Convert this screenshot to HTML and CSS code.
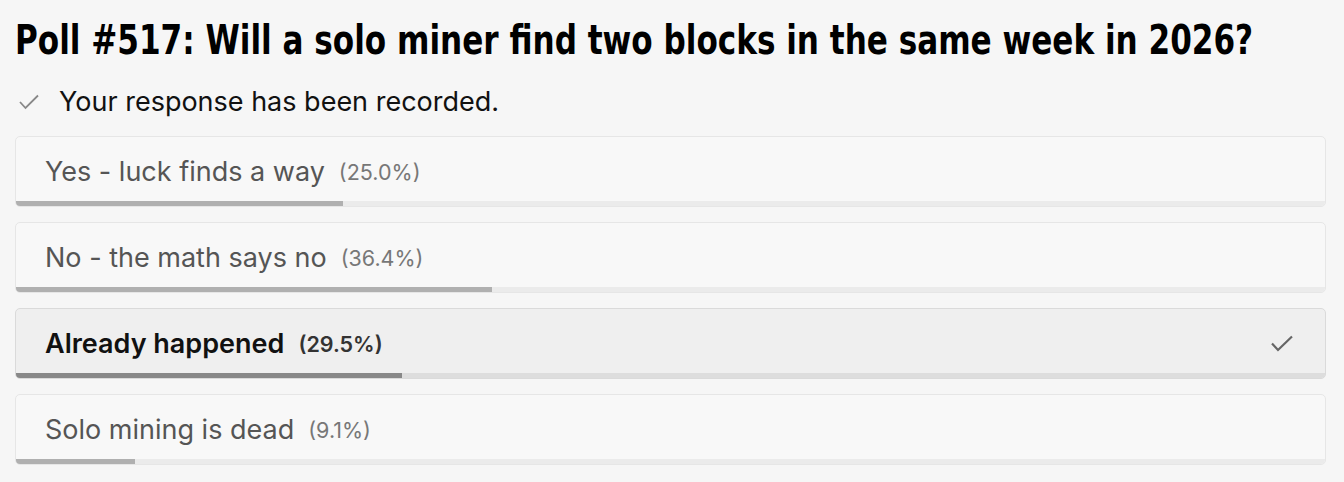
FILE: index.html
```html
<!DOCTYPE html>
<html lang="en">
<head>
<meta charset="utf-8">
<title>Poll #517</title>
<link rel="stylesheet" href="styles.css">
</head>
<body>
<main class="poll">
  <h1 class="poll-title"><span class="poll-title-text">Poll #517: Will a solo miner find two blocks in the same week in 2026?</span></h1>
  <p class="poll-status">
    <svg class="status-check" viewBox="0 0 20 16" width="20" height="16" aria-hidden="true"><polyline points="1,8 6.5,14 19,1.5" fill="none" stroke="currentColor" stroke-width="1.8"/></svg>
    <span>Your response has been recorded.</span>
  </p>
  <ul class="options">
    <li class="option">
      <div class="option-body"><span class="option-label">Yes - luck finds a way</span><span class="option-pct">(25.0%)</span></div>
      <div class="option-bar"><div class="option-fill" style="width:25.0%"></div></div>
    </li>
    <li class="option">
      <div class="option-body"><span class="option-label">No - the math says no</span><span class="option-pct">(36.4%)</span></div>
      <div class="option-bar"><div class="option-fill" style="width:36.4%"></div></div>
    </li>
    <li class="option option--selected">
      <div class="option-body"><span class="option-label">Already happened</span><span class="option-pct">(29.5%)</span>
        <svg class="option-check" viewBox="0 0 22 17" width="22" height="17" aria-hidden="true"><polyline points="1,8.5 7,15 21,1.5" fill="none" stroke="currentColor" stroke-width="2.2"/></svg>
      </div>
      <div class="option-bar"><div class="option-fill" style="width:29.5%"></div></div>
    </li>
    <li class="option">
      <div class="option-body"><span class="option-label">Solo mining is dead</span><span class="option-pct">(9.1%)</span></div>
      <div class="option-bar"><div class="option-fill" style="width:9.1%"></div></div>
    </li>
  </ul>
</main>
</body>
</html>
```

FILE: styles.css
```css
html, body {
  margin: 0;
  padding: 0;
  background: #f6f6f6;
}
body {
  font-family: Inter, "Noto Sans", sans-serif;
  color: #111;
}
.poll {
  padding: 16px 18px 0 15px;
}
.poll-title {
  margin: 0;
  font-family: "DejaVu Sans Condensed", "DejaVu Sans", sans-serif;
  font-stretch: condensed;
  font-weight: 700;
  font-size: 40px;
  line-height: 48px;
  color: #000;
  white-space: nowrap;
  overflow: hidden;
}
.poll-title-text {
  display: inline-block;
  transform: scaleX(0.864);
  transform-origin: 0 50%;
}
.poll-status {
  display: flex;
  align-items: center;
  gap: 20px;
  margin: 22px 0 0 4px;
  font-size: 27px;
  line-height: 32px;
  color: #111;
}
.status-check {
  color: #888;
  flex: none;
}
.options {
  list-style: none;
  margin: 18px 0 0;
  padding: 0;
  display: flex;
  flex-direction: column;
  gap: 15px;
}
.option {
  background: #f8f8f8;
  border: 1px solid #e6e6e6;
  border-radius: 5px;
  overflow: hidden;
  display: flex;
  flex-direction: column;
}
.option-body {
  box-sizing: border-box;
  height: 64px;
  display: flex;
  align-items: center;
  padding: 5px 32px 0 29px;
}
.option-label {
  font-size: 27px;
  color: #555;
}
.option-pct {
  margin-left: 14px;
  font-size: 21.5px;
  color: #777;
}
.option-bar {
  height: 5px;
  background: #ebebeb;
}
.option-fill {
  height: 100%;
  background: #b0b0b0;
}
.option--selected {
  background: #efefef;
  border-color: #dadada;
}
.option--selected .option-label {
  font-weight: 600;
  color: #111;
}
.option--selected .option-pct {
  font-weight: 600;
  color: #333;
}
.option--selected .option-bar {
  background: #dddddd;
}
.option--selected .option-fill {
  background: #888;
}
.option-check {
  margin-left: auto;
  color: #666;
  flex: none;
}
```
